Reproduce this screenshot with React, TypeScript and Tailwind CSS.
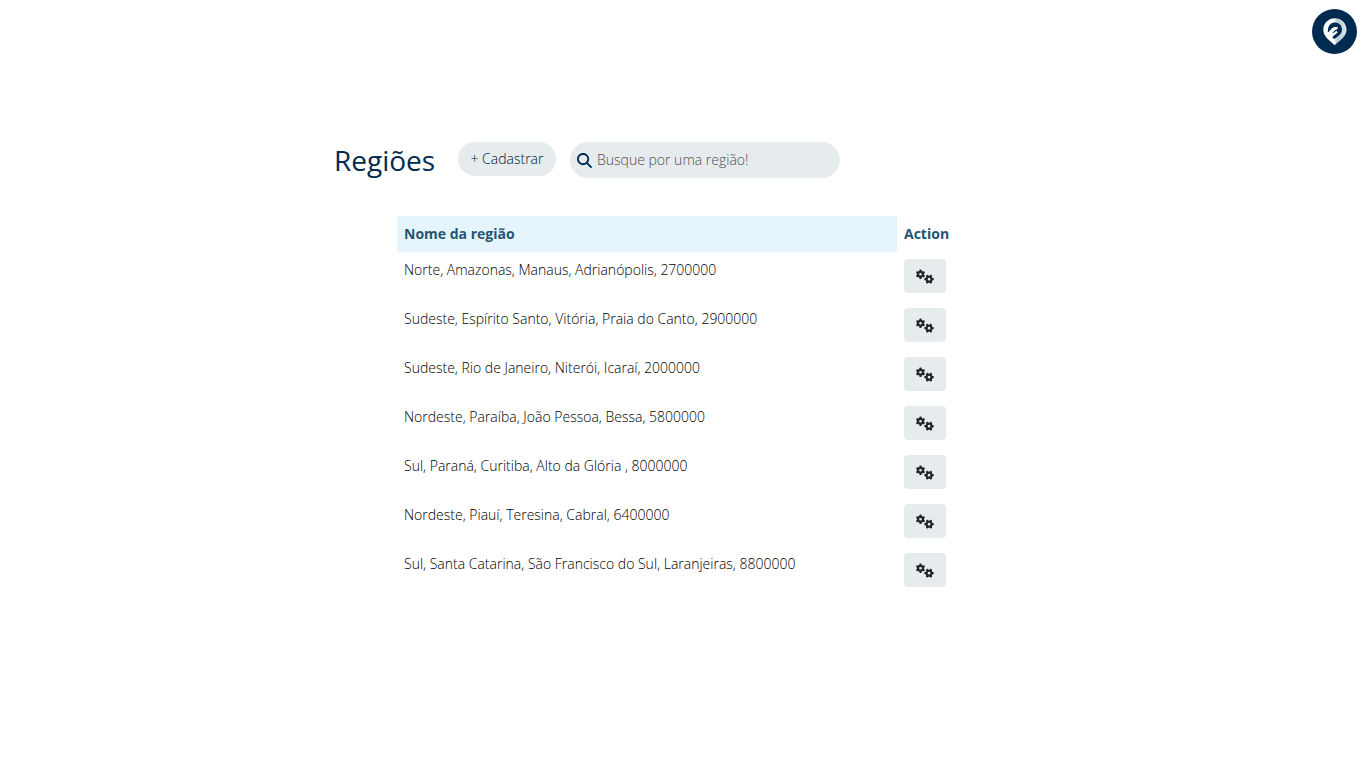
import { FaGears, FaMagnifyingGlass } from "react-icons/fa6";

const regions = [
  "Norte, Amazonas, Manaus, Adrianópolis, 2700000",
  "Sudeste, Espírito Santo, Vitória, Praia do Canto, 2900000",
  "Sudeste, Rio de Janeiro, Niterói, Icaraí, 2000000",
  "Nordeste, Paraíba, João Pessoa, Bessa, 5800000",
  "Sul, Paraná, Curitiba, Alto da Glória , 8000000",
  "Nordeste, Piauí, Teresina, Cabral, 6400000",
  "Sul, Santa Catarina, São Francisco do Sul, Laranjeiras, 8800000",
];

function Logo() {
  return (
    <svg viewBox="0 0 45 45" className="size-[45px]" aria-hidden="true">
      <defs>
        <linearGradient id="pin" x1="0" y1="0" x2="1" y2="0">
          <stop offset="0.45" stopColor="#ffffff" />
          <stop offset="0.6" stopColor="#b4cdd4" />
          <stop offset="1" stopColor="#dce8eb" />
        </linearGradient>
      </defs>
      <circle cx="22.5" cy="22.5" r="22.5" fill="#002b50" />
      <path
        d="M23 9.300C16.500 9.300 11.300 14.200 11.300 20.700C11.300 27.300 17 30.700 22.700 36.300C28.500 30.700 34.500 27.300 34.500 20.700C34.500 14.200 29.500 9.300 23 9.300Z"
        fill="url(#pin)"
      />
      <path
        d="M16 20.500C16.300 16.300 19.200 13.600 23 13.600C27 13.600 30 16.600 30 20.500C30 24.600 27 26.500 22.500 30L19.500 28L23.500 24.500L15.800 23Z"
        fill="#002b50"
      />
      <path
        d="M13.500 26.500L19.500 19.800C20.800 18.300 23 17.600 25.800 18.200C25.800 20 24.800 20.800 23.200 21L20 24.500L20.500 29.500L16 30Z"
        fill="#ffffff"
      />
      <path d="M18.500 28L25 22.700" stroke="#ffffff" strokeWidth="2.200" />
    </svg>
  );
}

export default function App() {
  return (
    <div className="min-h-screen bg-white font-['Open_Sans','Noto_Sans',sans-serif] text-sm text-[#212529]">
      <header className="flex justify-end px-2 pt-[9px]">
        <a href="#" aria-label="Início">
          <Logo />
        </a>
      </header>

      <main className="mx-auto mt-[88px] max-w-[697px]">
        <div className="flex flex-wrap items-start">
          <h1 className="w-[124px] text-[28px] leading-[36px] font-medium text-[#002b50]">
            Regiões
          </h1>
          <button
            type="button"
            className="h-[34px] w-[98px] rounded-full bg-[#e6ebee] font-light whitespace-nowrap text-[#001a30]"
          >
            + Cadastrar
          </button>
          <label className="ml-[14px] flex h-9 w-[270px] items-center gap-[5px] rounded-full bg-[#e6ebee] px-[7px]">
            <FaMagnifyingGlass className="size-[15px] shrink-0 text-[#002b50]" aria-hidden="true" />
            <input
              type="search"
              aria-label="Buscar região"
              placeholder="Busque por uma região!"
              className="min-w-0 flex-1 bg-transparent font-light outline-none placeholder:text-[#505050]"
            />
          </label>
        </div>

        <table className="mx-auto mt-[38px] w-[571px] table-fixed text-left">
          <thead>
            <tr className="h-9 text-[#265573]">
              <th className="w-[500px] bg-[#e6f5fd] px-[7px] font-bold">Nome da região</th>
              <th className="px-[7px] font-bold">Action</th>
            </tr>
          </thead>
          <tbody>
            {regions.map((region) => (
              <tr key={region} className="h-[49px]">
                <td className="px-[7px] pt-2 align-top leading-5 font-light text-black">{region}</td>
                <td className="px-[7px] pt-[7px] align-top">
                  <button
                    type="button"
                    aria-label={`Opções: ${region}`}
                    className="flex h-[34px] w-[42px] items-center justify-center rounded bg-[#e6ebee]"
                  >
                    <FaGears className="h-[15px] w-[18px]" aria-hidden="true" />
                  </button>
                </td>
              </tr>
            ))}
          </tbody>
        </table>
      </main>
    </div>
  );
}
